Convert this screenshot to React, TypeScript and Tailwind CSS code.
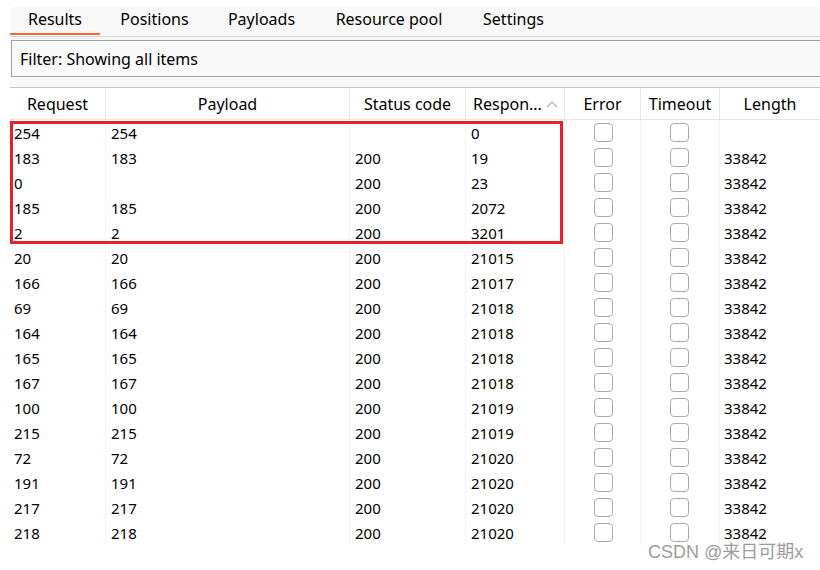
import React from "react";

const rows: [string, string, string, string, string][] = [
  ["254", "254", "", "0", ""],
  ["183", "183", "200", "19", "33842"],
  ["0", "", "200", "23", "33842"],
  ["185", "185", "200", "2072", "33842"],
  ["2", "2", "200", "3201", "33842"],
  ["20", "20", "200", "21015", "33842"],
  ["166", "166", "200", "21017", "33842"],
  ["69", "69", "200", "21018", "33842"],
  ["164", "164", "200", "21018", "33842"],
  ["165", "165", "200", "21018", "33842"],
  ["167", "167", "200", "21018", "33842"],
  ["100", "100", "200", "21019", "33842"],
  ["215", "215", "200", "21019", "33842"],
  ["72", "72", "200", "21020", "33842"],
  ["191", "191", "200", "21020", "33842"],
  ["217", "217", "200", "21020", "33842"],
  ["218", "218", "200", "21020", "33842"],
];

const cols = "grid grid-cols-[96px_244px_116px_99px_76px_79px_100px]";

function Box() {
  return <div className="w-[19px] h-[19px] rounded-[4px] border border-[#ababab] bg-white" />;
}

export default function App() {
  return (
    <div
      className="relative w-[820px] h-[570px] bg-white overflow-hidden text-[16px] text-black"
      style={{ fontFamily: '"Noto Sans", "Noto Sans CJK SC", sans-serif' }}
    >
      <div className="pt-[7px] pl-[10px]">
        {/* tabs */}
        <div className="flex h-[30px] bg-[#f8f8f8] border-b border-[#d6d6d6]">
          <div className="relative w-[90px] flex items-center justify-center pb-[5px]">
            Results
            <div className="absolute left-0 right-0 bottom-[1px] h-[2px] bg-[#ff6633]" />
          </div>
          <div className="w-[109px] flex items-center justify-center pb-[5px]">Positions</div>
          <div className="w-[105px] flex items-center justify-center pb-[5px]">Payloads</div>
          <div className="w-[150px] flex items-center justify-center pb-[5px]">Resource pool</div>
          <div className="w-[99px] flex items-center justify-center pb-[5px]">Settings</div>
        </div>
        {/* filter area */}
        <div className="bg-[#f8f8f8] pt-[3px] pb-[10px]">
          <div className="ml-px h-[37px] border-y border-l border-[#a3a3a3] bg-[#f9f9f9] flex items-center pl-[8px]">
            Filter: Showing all items
          </div>
        </div>
        {/* table */}
        <div className="relative border-t border-[#c8c8c8]">
          <div className={`${cols} h-[32px] border-b border-[#e6e6e6] bg-white`}>
            <div className="flex items-center justify-center border-r border-[#e6e6e6]">Request</div>
            <div className="flex items-center justify-center border-r border-[#e6e6e6]">Payload</div>
            <div className="flex items-center justify-center border-r border-[#e6e6e6]">Status code</div>
            <div className="flex items-center pl-[7px] border-r border-[#e6e6e6]">
              <span>Respon...</span>
              <svg width="12" height="8" viewBox="0 0 12 8" className="ml-[4px]">
                <polyline points="1,7 6,2 11,7" fill="none" stroke="#b0b0b0" strokeWidth="1.2" />
              </svg>
            </div>
            <div className="flex items-center justify-center border-r border-[#e6e6e6]">Error</div>
            <div className="flex items-center justify-center border-r border-[#e6e6e6]">Timeout</div>
            <div className="flex items-center justify-center">Length</div>
          </div>
          <div className="text-[15px]">
            {rows.map((r, i) => (
              <div key={i} className={`${cols} h-[25px]`}>
                <div className="flex items-center pl-[4px] pt-[1px] border-r border-[#f4f4f4]">{r[0]}</div>
                <div className="flex items-center pl-[5px] pt-[1px] border-r border-[#f4f4f4]">{r[1]}</div>
                <div className="flex items-center pl-[5px] pt-[1px] border-r border-[#f4f4f4]">{r[2]}</div>
                <div className="flex items-center pl-[5px] pt-[1px] border-r border-[#f4f4f4]">{r[3]}</div>
                <div className="flex items-center justify-center pl-[1px] border-r border-[#f4f4f4]">
                  <Box />
                </div>
                <div className="flex items-center justify-center pr-[1px] border-r border-[#f4f4f4]">
                  <Box />
                </div>
                <div className="flex items-center pl-[4px] pt-[1px]">{r[4]}</div>
              </div>
            ))}
          </div>
          {/* red highlight */}
          <div className="absolute left-0 top-[33px] w-[553px] h-[123px] border-[3px] border-[#e8202a]" />
        </div>
      </div>
      <div
        className="absolute left-[648px] top-[539px] text-[18px] text-[#9c9c9c]"
        style={{ fontFamily: '"Liberation Sans", "Noto Sans CJK SC", sans-serif', textShadow: "0 0 2px #fff" }}
      >
        CSDN @来日可期x
      </div>
    </div>
  );
}
